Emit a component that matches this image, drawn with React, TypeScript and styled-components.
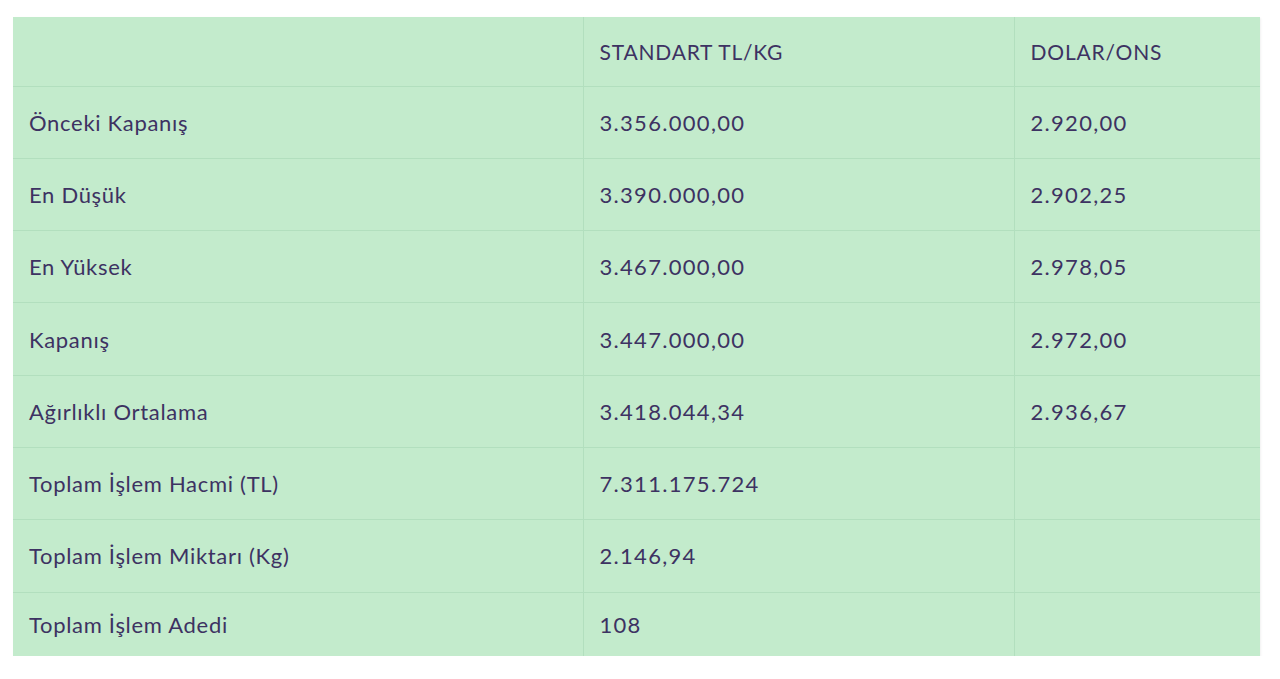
import * as React from 'react';
import styled, { createGlobalStyle } from 'styled-components';

const GlobalStyle = createGlobalStyle`
    body {
        margin: 0;
        background: #ffffff;
        font-family: Lato, 'Noto Sans', sans-serif;
    }
`;

const Page = styled.div`
    padding: 17px 20px 0 13px;
`;

const StyledTable = styled.table`
    width: 1247px;
    border-collapse: collapse;
    table-layout: fixed;
    background: #c3ebcc;
    box-shadow: 1px 1px 2px rgba(0, 0, 0, 0.06);

    tbody tr:last-child td {
        border-bottom: none;
    }
`;

const Row = styled.tr<{ $height: number }>`
    height: ${(p) => p.$height}px;
`;

const Cell = styled.td<{ $numeric?: boolean }>`
    padding: 0 16px;
    color: #3d3262;
    font-size: 22px;
    font-weight: 400;
    letter-spacing: ${(p) => (p.$numeric ? '1.3px' : '0.7px')};
    text-align: left;
    vertical-align: middle;
    white-space: nowrap;
    border-bottom: 1px solid #b2dfbe;

    &:not(:first-child) {
        border-left: 1px solid #b2dfbe;
    }
`;

const HeadCell = styled(Cell).attrs({ as: 'th' })`
    font-size: 21px;
    letter-spacing: 0.8px;
`;

const rows: [string, string, string][] = [
    ['Önceki Kapanış', '3.356.000,00', '2.920,00'],
    ['En Düşük', '3.390.000,00', '2.902,25'],
    ['En Yüksek', '3.467.000,00', '2.978,05'],
    ['Kapanış', '3.447.000,00', '2.972,00'],
    ['Ağırlıklı Ortalama', '3.418.044,34', '2.936,67'],
    ['Toplam İşlem Hacmi (TL)', '7.311.175.724', ''],
    ['Toplam İşlem Miktarı (Kg)', '2.146,94', ''],
    ['Toplam İşlem Adedi', '108', ''],
];

const App = (): JSX.Element => (
    <Page>
        <GlobalStyle />
        <StyledTable>
            <colgroup>
                <col style={{ width: 570 }} />
                <col style={{ width: 431 }} />
                <col />
            </colgroup>
            <thead>
                <Row $height={69}>
                    <HeadCell />
                    <HeadCell>STANDART TL/KG</HeadCell>
                    <HeadCell>DOLAR/ONS</HeadCell>
                </Row>
            </thead>
            <tbody>
                {rows.map(([label, tl, usd], i) => (
                    <Row key={label} $height={i === rows.length - 1 ? 64 : 72.3}>
                        <Cell>{label}</Cell>
                        <Cell $numeric>{tl}</Cell>
                        <Cell $numeric>{usd}</Cell>
                    </Row>
                ))}
            </tbody>
        </StyledTable>
    </Page>
);

export default App;
